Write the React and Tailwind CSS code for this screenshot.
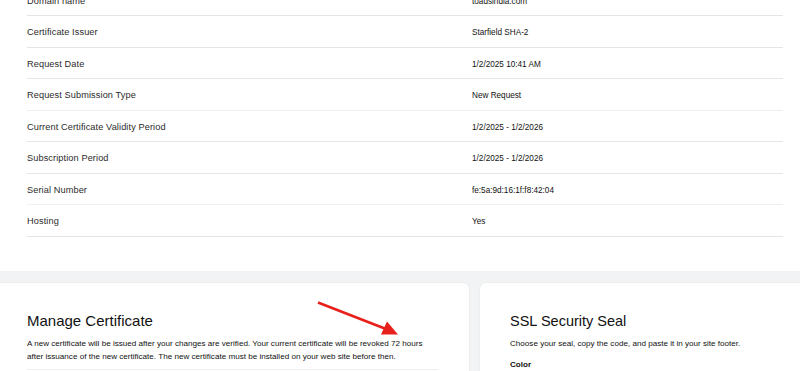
import React from "react";

const rows = [
  ["Domain name", "toadsindia.com"],
  ["Certificate Issuer", "Starfield SHA-2"],
  ["Request Date", "1/2/2025 10:41 AM"],
  ["Request Submission Type", "New Request"],
  ["Current Certificate Validity Period", "1/2/2025 - 1/2/2026"],
  ["Subscription Period", "1/2/2025 - 1/2/2026"],
  ["Serial Number", "fe:5a:9d:16:1f:f8:42:04"],
  ["Hosting", "Yes"],
];

export default function App() {
  return (
    <div
      className="w-[800px] h-[371px] overflow-hidden bg-[#f2f3f4] relative"
      style={{ fontFamily: "'Liberation Sans', Arial, sans-serif" }}
    >
      <div className="bg-white h-[271px] pl-[27px] pr-[17px] overflow-hidden">
        <div className="-mt-[15.5px]">
          {rows.map(([k, v], i) => (
            <div
              key={i}
              className={`flex items-center h-[31.5px] pt-[4px] border-b ${
                i === 3 || i === 6 ? "border-[#eeeff1]" : "border-[#e3e5e8]"
              }`}
            >
              <div className="w-[445px] text-[9.2px] text-[#2b2b2b] tracking-[0.1px]">{k}</div>
              <div className="text-[8.2px] text-[#111]">{v}</div>
            </div>
          ))}
        </div>
      </div>
      <div className="flex gap-[11px] mt-[12px]">
        <div className="w-[469px] h-[120px] bg-white rounded-tr-[6px] shadow-[0_0_2px_rgba(0,0,0,0.08)] pt-[28px] pl-[27px] pr-[31px]">
          <h2 className="text-[15px] leading-[20px] text-[#111] font-medium">Manage Certificate</h2>
          <p className="mt-[5.5px] max-w-[405px] text-[8.1px] leading-[13px] text-[#111]">
            A new certificate will be issued after your changes are verified. Your current certificate will be revoked 72 hours after issuance of the new certificate. The new certificate must be installed on your web site before then.
          </p>
          <div className="mt-[6px] border-t border-[#eeeff1] h-[10px]"></div>
        </div>
        <div className="flex-1 h-[120px] bg-white rounded-tl-[6px] shadow-[0_0_2px_rgba(0,0,0,0.08)] pt-[28px] pl-[30px]">
          <h2 className="text-[14.5px] leading-[20px] text-[#111] font-medium">SSL Security Seal</h2>
          <p className="mt-[5.5px] text-[8.1px] leading-[13px] text-[#111]">
            Choose your seal, copy the code, and paste it in your site footer.
          </p>
          <p className="mt-[8px] text-[8.1px] leading-[13px] text-[#111] font-bold">Color</p>
        </div>
      </div>
      <svg className="absolute left-0 top-0" width="800" height="371" viewBox="0 0 800 371">
        <line x1="318" y1="302.5" x2="386" y2="329" stroke="#e8201c" strokeWidth="2.6" />
        <polygon points="398,334.5 381,334.5 387,321.5" fill="#e8201c" />
      </svg>
    </div>
  );
}
